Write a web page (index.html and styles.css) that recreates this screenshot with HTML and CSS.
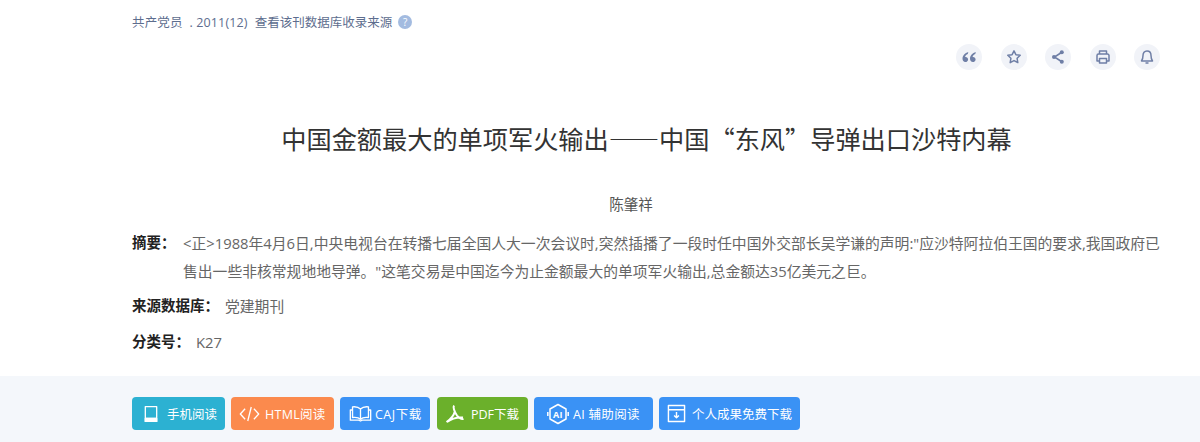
FILE: index.html
```html
<!DOCTYPE html>
<html lang="zh-CN">
<head>
    <meta charset="UTF-8">
    <title>中国金额最大的单项军火输出——中国“东风”导弹出口沙特内幕</title>
    <link rel="stylesheet" href="styles.css">
</head>
<body>
    <div class="top-info">
        <span class="journal">共产党员 &nbsp;. 2011(12)</span>
        <span class="source-link">查看该刊数据库收录来源</span>
        <span class="help">?</span>
    </div>

    <div class="tools">
        <span class="tool"><svg viewBox="0 0 16 16"><path class="solid" d="M7.300 3C4 4 1.500 6.500 1.500 9.800c0 2 1.200 3.200 2.800 3.200s2.800-1.100 2.800-2.600-1.100-2.500-2.500-2.500c-.2 0-.4 0-.5.1.3-1.300 1.100-2.300 2.700-3zM14.800 3c-3.300 1-5.800 3.500-5.800 6.800 0 2 1.200 3.200 2.800 3.200s2.800-1.100 2.800-2.600-1.100-2.500-2.500-2.500c-.2 0-.4 0-.5.1.3-1.300 1.100-2.300 2.700-3z"/></svg></span>
        <span class="tool"><svg viewBox="0 0 16 16"><path d="M8 1.800l1.900 3.900 4.300.6-3.100 3 .7 4.300L8 11.600l-3.800 2 .7-4.300-3.100-3 4.300-.6z"/></svg></span>
        <span class="tool"><svg viewBox="0 0 16 16"><path d="M11.500 3.500L4.500 8l7 4.500"/><circle class="solid" cx="11.800" cy="3.300" r="2"/><circle class="solid" cx="4" cy="8" r="2"/><circle class="solid" cx="11.800" cy="12.700" r="2"/></svg></span>
        <span class="tool"><svg viewBox="0 0 16 16"><path d="M4.500 5V2h7v3M4.500 12H2V6.500A1.500 1.500 0 0 1 3.500 5h9A1.500 1.500 0 0 1 14 6.500V12h-2.500M4.500 9.500h7V14h-7z"/></svg></span>
        <span class="tool"><svg viewBox="0 0 16 16"><path d="M8 2c-2.600 0-4 2-4 4.500 0 2.800-.5 4-1.500 5.500h11c-1-1.500-1.500-2.700-1.500-5.500C12 4 10.600 2 8 2zM6.500 14h3"/></svg></span>
    </div>

    <h1 class="title">中国金额最大的单项军火输出——中国“东风”导弹出口沙特内幕</h1>
    <div class="author">陈肇祥</div>

    <div class="meta">
        <div class="row">
            <span class="label label-abstract">摘要：</span>
            <p class="abstract">&lt;正&gt;1988年4月6日,中央电视台在转播七届全国人大一次会议时,突然插播了一段时任中国外交部长吴学谦的声明:"应沙特阿拉伯王国的要求,我国政府已售出一些非核常规地地导弹。"这笔交易是中国迄今为止金额最大的单项军火输出,总金额达35亿美元之巨。</p>
        </div>
        <div class="row row-short">
            <span class="label">来源数据库：</span>
            <span class="value">党建期刊</span>
        </div>
        <div class="row row-short row-last">
            <span class="label">分类号：</span>
            <span class="value">K27</span>
        </div>
    </div>

    <div class="actions">
        <a class="btn btn-cyan btn-phone"><svg viewBox="0 0 16 20"><path d="M1.500 1.500h13v17h-13zM1.500 15h13"/><path class="fat" d="M1.500 15h13v3.500h-13z"/></svg>手机阅读</a>
        <a class="btn btn-orange btn-html"><svg viewBox="0 0 24 20"><path d="M7 4l-5.500 6L7 16M17 4l5.500 6-5.500 6M14 2l-4 16"/></svg>HTML阅读</a>
        <a class="btn btn-blue btn-caj"><svg viewBox="0 0 26 20"><path d="M13 5C11 3 8 2 4 2.500v12c4-.5 7 0 9 2 2-2 5-2.500 9-2v-12C18 2 15 3 13 5zM13 5v11.500M4 6H1.500v11.500H11l2 1 2-1h9.500V6H22"/></svg>CAJ下载</a>
        <a class="btn btn-green btn-pdf"><svg viewBox="0 0 20 20"><path d="M9 1.500c-1 1.500 0 6 3 10 2 2.500 4.500 4 6.500 3.500M10 7c-1 4-4 8-8.500 11M2 18c4-3 10-5 16-4.500"/></svg>PDF下载</a>
        <a class="btn btn-blue btn-ai"><svg viewBox="0 0 22 22"><path d="M11 1.500l8 4.500v10l-8 4.500L3 16V6z"/><path d="M.8 9v4M21.200 9v4"/><text x="11" y="14.500" class="ai-mark">AI</text></svg>AI 辅助阅读</a>
        <a class="btn btn-blue btn-free"><svg viewBox="0 0 20 20"><path d="M1.500 6V1.500h17v17h-17V6h17M10 8.500v6M7.500 12l2.500 2.500 2.500-2.500"/></svg>个人成果免费下载</a>
    </div>
</body>
</html>
```

FILE: styles.css
```css
body {
    margin: 0;
    height: 442px;
    overflow: hidden;
    background-color: #fff;
    font-family: "Open Sans", "Noto Sans CJK SC", sans-serif;
    color: #333;
}
.top-info {
    display: flex;
    align-items: center;
    padding: 13px 0 0 132px;
    height: 17px;
    font-size: 12.500px;
    color: #5d6d8e;
}
.journal {
    margin-right: 7px;
    letter-spacing: .15px;
}
.help {
    width: 14px;
    height: 14px;
    margin-left: 6px;
    border-radius: 50%;
    background-color: #a3bbe0;
    color: #fff;
    font-size: 10px;
    line-height: 14px;
    text-align: center;
}
.tools {
    display: flex;
    justify-content: flex-end;
    gap: 18.500px;
    padding: 14px 40px 0 0;
}
.tool {
    display: flex;
    align-items: center;
    justify-content: center;
    width: 26px;
    height: 26px;
    border-radius: 50%;
    background-color: #f1f3f8;
}
.tool svg {
    width: 16px;
    height: 16px;
    fill: none;
    stroke: #6f7fa6;
    stroke-width: 1.500;
    stroke-linejoin: round;
}
.tool .solid {
    fill: #6f7fa6;
    stroke: none;
}
.title {
    margin: 48px 0 0;
    padding-left: 93px;
    font-family: "Noto Sans CJK SC", sans-serif;
    font-size: 25.200px;
    font-weight: 400;
    line-height: 40px;
    text-align: center;
    color: #333;
}
.author {
    margin-top: 37px;
    padding-left: 62px;
    font-size: 14.500px;
    line-height: 20px;
    text-align: center;
    color: #555;
}
.meta {
    padding: 14px 38px 0 132px;
}
.row {
    display: flex;
    font-size: 14.800px;
    line-height: 28px;
    color: #666;
}
.row-short {
    margin-top: 7px;
}
.row-last {
    margin-top: 8px;
}
.label {
    flex: none;
    margin-right: 6px;
    font-size: 14.500px;
    font-weight: 700;
    color: #222;
}
.label-abstract {
    width: 45px;
}
.abstract {
    margin: 0;
}
.actions {
    display: flex;
    gap: 6px;
    position: absolute;
    top: 376px;
    left: 0;
    right: 0;
    height: 66px;
    padding: 21px 0 0 132px;
    box-sizing: border-box;
    background-color: #f4f7fb;
}
.btn {
    display: flex;
    align-items: center;
    height: 33px;
    border-radius: 4px;
    font-size: 12.500px;
    color: #fff;
}
.btn svg {
    flex: none;
    margin-right: 5px;
    fill: none;
    stroke: #fff;
    stroke-width: 1.500;
    stroke-linejoin: round;
}
.btn .fat {
    fill: #fff;
}
.btn-phone {
    width: 93px;
    padding-left: 12px;
    box-sizing: border-box;
}
.btn-phone svg {
    width: 14px;
    height: 18px;
    margin-right: 9px;
}
.btn-html {
    width: 103px;
    padding-left: 8px;
    box-sizing: border-box;
    letter-spacing: .3px;
}
.btn-html svg {
    width: 21px;
    height: 18px;
}
.btn-caj {
    width: 90px;
    padding-left: 9px;
    box-sizing: border-box;
    letter-spacing: .5px;
}
.btn-caj svg {
    width: 23px;
    height: 19px;
    margin-right: 3px;
}
.btn-pdf {
    width: 91px;
    margin-left: 1px;
    padding-left: 8px;
    box-sizing: border-box;
}
.btn-pdf svg {
    width: 20px;
    height: 20px;
    stroke-width: 2;
    margin-right: 6px;
}
.btn-ai {
    width: 119px;
    padding-left: 13px;
    box-sizing: border-box;
    letter-spacing: .3px;
}
.btn-ai svg {
    width: 22px;
    height: 22px;
    margin-right: 4px;
}
.btn-free {
    width: 141px;
    padding-left: 8px;
    box-sizing: border-box;
}
.btn-free svg {
    width: 19px;
    height: 19px;
    margin-right: 6px;
}
.ai-mark {
    fill: #fff;
    stroke: none;
    font-size: 9px;
    font-weight: 700;
    text-anchor: middle;
}
.btn-cyan {
    background-color: #2cb1d2;
}
.btn-orange {
    background-color: #fb8a4d;
}
.btn-blue {
    background-color: #3a92f5;
}
.btn-green {
    background-color: #6bb02b;
}
```
